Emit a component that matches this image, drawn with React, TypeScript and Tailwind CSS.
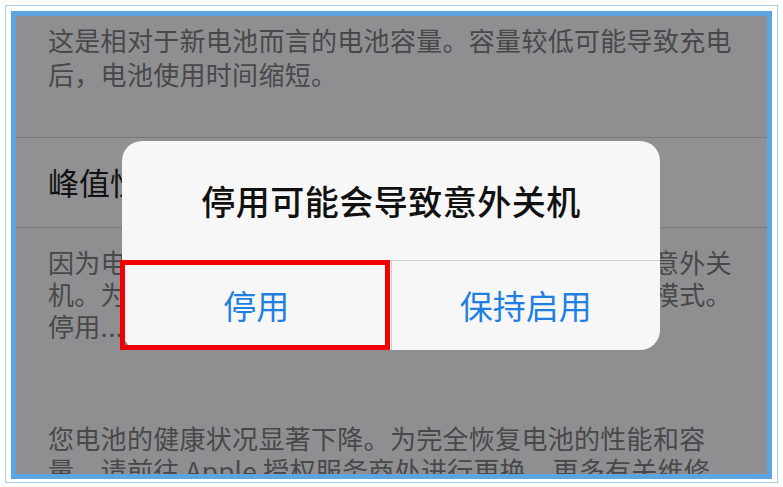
export default function App() {
  return (
    <div
      className="w-[783px] h-[487px] bg-white px-[5px] pt-[5px] pb-[4px]"
      style={{ fontFamily: '"Noto Sans CJK SC", "Noto Sans", sans-serif' }}
    >
      <div className="h-full border border-[#a9cdee] px-[5px] pt-[5px] pb-[3px]">
        <div className="relative h-full border-[5px] border-[#5fa4e2] bg-[#8f8f91] overflow-hidden">
          {/* capacity explanation */}
          <div className="h-[122px] border-b border-[#7b7b7d] pl-[32px] pr-[24px] pt-[7px]">
            <p className="text-[26px] tracking-[0.3px] leading-[34px] text-[#48484a]">
              这是相对于新电池而言的电池容量。容量较低可能导致充电后，电池使用时间缩短。
            </p>
          </div>

          {/* peak performance row */}
          <div className="h-[90px] border-b border-[#7b7b7d] bg-[#919193] pl-[32px] flex items-center">
            <span className="text-[31px] text-[#111]">峰值性能容量</span>
          </div>

          <div className="pl-[32px] pr-[24px] pt-[18px]">
            <p className="text-[26px] tracking-[0.3px] leading-[32px] text-[#48484a]">
              因为电池无法提供必要的峰值电量，此手机已出现过意外关机。为防止再次发生这种情况，系统已启用性能管理模式。停用...
            </p>
            <p className="mt-[80px] text-[26px] tracking-[0.3px] leading-[32px] text-[#48484a]">
              您电池的健康状况显著下降。为完全恢复电池的性能和容量，请前往 Apple 授权服务商处进行更换。更多有关维修
              <span className="whitespace-nowrap">选项的信息…</span>
            </p>
          </div>

          {/* alert */}
          <div className="absolute left-[106px] top-[125px] w-[538px] h-[209px] rounded-[20px] bg-[#f7f7f7] flex flex-col">
            <div className="h-[120px] border-b border-[#cfcfd1] flex items-center justify-center">
              <span className="text-[34px] font-medium text-[#111] tracking-[0.5px]">停用可能会导致意外关机</span>
            </div>
            <div className="flex-1 flex">
              <button className="flex-1 flex items-center justify-center text-[33px] text-[#1f7fe2] border-r border-[#cfcfd1]">
                停用
              </button>
              <button className="flex-1 flex items-center justify-center text-[33px] text-[#1f7fe2]">
                保持启用
              </button>
            </div>
            {/* highlight box */}
            <div className="absolute left-[-2px] top-[119px] w-[270px] h-[90px] border-[5px] border-[#f00000]" />
          </div>
        </div>
      </div>
    </div>
  );
}
